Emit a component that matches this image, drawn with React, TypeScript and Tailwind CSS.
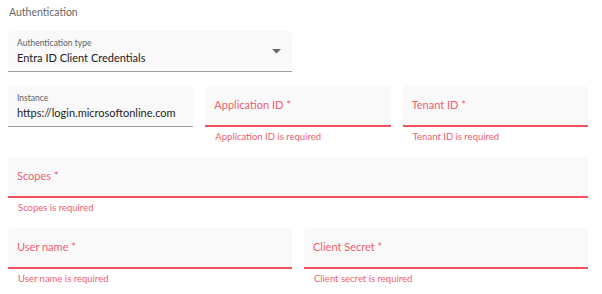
const font = { fontFamily: 'Lato, "Noto Sans", sans-serif' };

function FilledField({ label, value }: { label: string; value: string }) {
  return (
    <div className="h-[41px] rounded-t-[4px] bg-[#f9f9f9] border-b border-[#a0a0a0] px-[9px] pt-[6px]">
      <div className="text-[8.5px] leading-[12px] text-[#5f5f5f]">{label}</div>
      <div className="text-[11px] leading-[17px] text-[#222]">{value}</div>
    </div>
  );
}

function ErrorField({ label, error }: { label: string; error: string }) {
  return (
    <div>
      <div className="h-[41px] rounded-t-[4px] bg-[#f9f9f9] border-b-2 border-[#f2505f] px-[9px] flex items-center">
        <span className="text-[11px] text-[#f0606f]">{label} *</span>
      </div>
      <div className="text-[9.5px] leading-[14px] text-[#f0606f] px-[10px] pt-[3px] h-[30px]">{error}</div>
    </div>
  );
}

export default function App() {
  return (
    <div className="w-[602px] h-[294px] bg-white px-2 pt-[4px]" style={font}>
      <div className="w-[580px]">
        <div className="text-[10.5px] text-[#666] pl-[1px] leading-[17px]">Authentication</div>
        <div className="grid grid-cols-2 gap-x-3 mt-[10px]">
          <div className="relative">
            <FilledField label="Authentication type" value="Entra ID Client Credentials" />
            <svg className="absolute right-[11px] top-[18px]" width="9" height="5" viewBox="0 0 9 5">
              <path d="M0 0 L9 0 L4.5 4.5 Z" fill="#666" />
            </svg>
          </div>
        </div>
        <div className="grid grid-cols-3 gap-x-3 mt-[14px]">
          <FilledField label="Instance" value="https://login.microsoftonline.com" />
          <ErrorField label="Application ID" error="Application ID is required" />
          <ErrorField label="Tenant ID" error="Tenant ID is required" />
        </div>
        <div>
          <ErrorField label="Scopes" error="Scopes is required" />
        </div>
        <div className="grid grid-cols-2 gap-x-3">
          <ErrorField label="User name" error="User name is required" />
          <ErrorField label="Client Secret" error="Client secret is required" />
        </div>
      </div>
    </div>
  );
}
